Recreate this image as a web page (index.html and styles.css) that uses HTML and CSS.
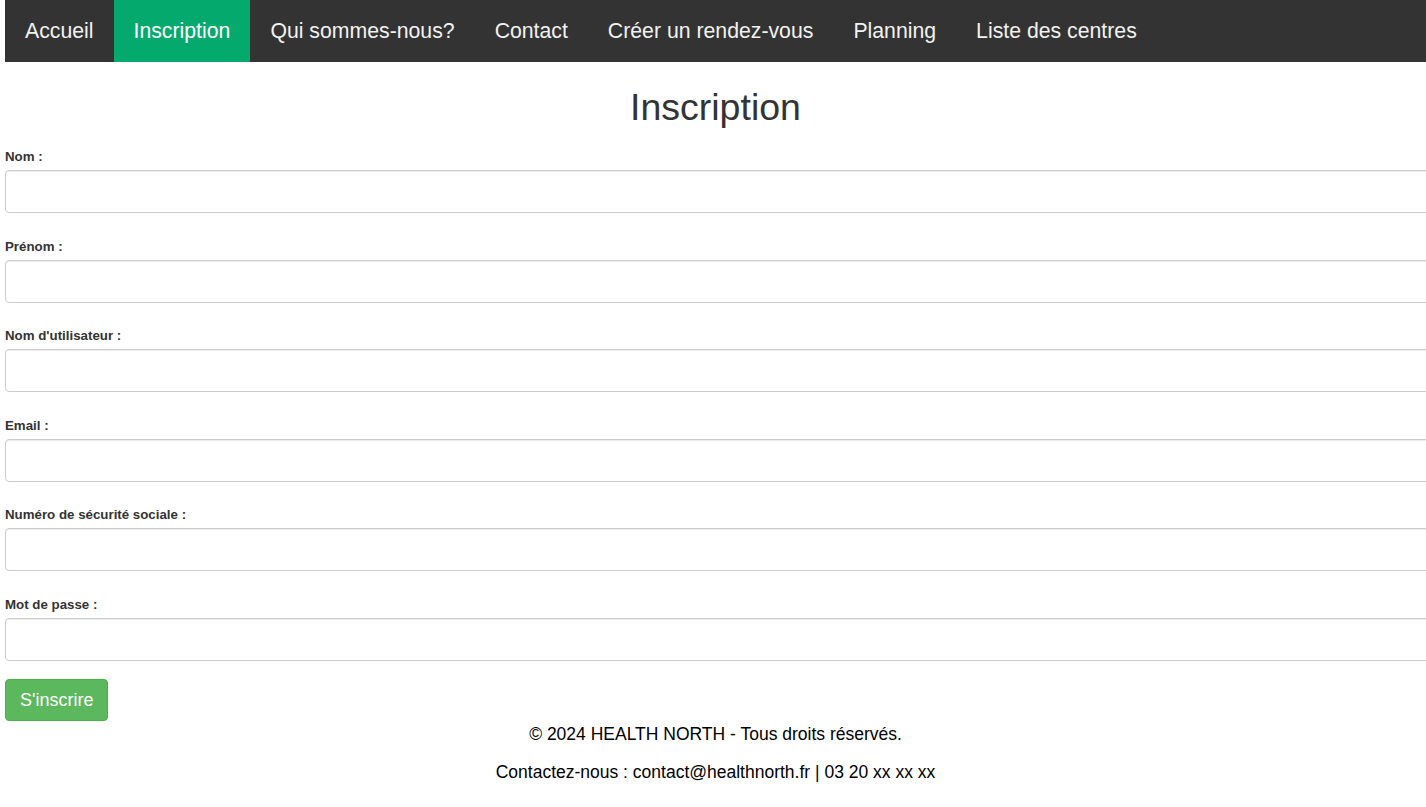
FILE: index.html
```html
<!DOCTYPE html>
<html lang="fr">
<head>
<meta charset="utf-8">
<title>Inscription</title>
<link rel="stylesheet" href="styles.css">
</head>
<body>
<nav class="topnav">
  <a href="#">Accueil</a>
  <a href="#" class="active">Inscription</a>
  <a href="#">Qui sommes-nous?</a>
  <a href="#">Contact</a>
  <a href="#">Créer un rendez-vous</a>
  <a href="#">Planning</a>
  <a href="#">Liste des centres</a>
</nav>
<main class="content">
  <h1 class="title">Inscription</h1>
  <form class="form">
    <div class="group">
      <label class="label" for="nom">Nom :</label>
      <input class="control" type="text" id="nom">
    </div>
    <div class="group">
      <label class="label" for="prenom">Prénom :</label>
      <input class="control" type="text" id="prenom">
    </div>
    <div class="group">
      <label class="label" for="user">Nom d'utilisateur :</label>
      <input class="control" type="text" id="user">
    </div>
    <div class="group">
      <label class="label" for="email">Email :</label>
      <input class="control" type="email" id="email">
    </div>
    <div class="group">
      <label class="label" for="secu">Numéro de sécurité sociale :</label>
      <input class="control" type="text" id="secu">
    </div>
    <div class="group">
      <label class="label" for="mdp">Mot de passe :</label>
      <input class="control" type="password" id="mdp">
    </div>
    <button type="button" class="btn">S'inscrire</button>
  </form>
  <footer class="footer">
    <p>© 2024 HEALTH NORTH - Tous droits réservés.</p>
    <p>Contactez-nous : contact@healthnorth.fr | 03 20 xx xx xx</p>
  </footer>
</main>
</body>
</html>
```

FILE: styles.css
```css
html {
  overflow-x: hidden;
}
body {
  margin: 0 0 0 5px;
  font-family: "Liberation Sans", Arial, sans-serif;
  color: #333;
  background: #fff;
}
.topnav {
  display: flex;
  background: #333;
  width: calc(100% + 10px);
}
.topnav a {
  display: block;
  color: #f2f2f2;
  text-decoration: none;
  font-size: 21.25px;
  line-height: 22px;
  padding: 20px 20px;
}
.topnav a.active {
  background: #04aa6d;
  color: #fff;
}
.title {
  text-align: center;
  font-size: 37.5px;
  font-weight: 400;
  line-height: 40px;
  margin: 25px 0 21px;
  color: #333;
}
.form {
  display: flex;
  flex-direction: column;
  align-items: flex-start;
}
.group {
  width: 100%;
  margin-bottom: 24.5px;
}
.group:last-of-type {
  margin-bottom: 18px;
}
.label {
  display: block;
  font-size: 13.3px;
  font-weight: 700;
  line-height: 17px;
  margin-bottom: 5px;
}
.control {
  display: block;
  box-sizing: border-box;
  width: calc(100% + 20px);
  height: 43px;
  padding: 6px 12px;
  font-size: 14px;
  border: 1px solid #ccc;
  border-radius: 4px;
  box-shadow: inset 0 1px 1px rgba(0,0,0,.075);
  background: #fff;
}
.btn {
  font-family: "Liberation Sans", Arial, sans-serif;
  font-size: 18px;
  line-height: 24px;
  padding: 8px 14px;
  color: #fff;
  background: #5cb85c;
  border: 1px solid #4cae4c;
  border-radius: 4px;
}
.footer {
  text-align: center;
  color: #000;
  font-size: 17.5px;
  line-height: 24px;
  padding-top: 1px;
}
.footer p {
  margin: 0 0 14px;
}
```
